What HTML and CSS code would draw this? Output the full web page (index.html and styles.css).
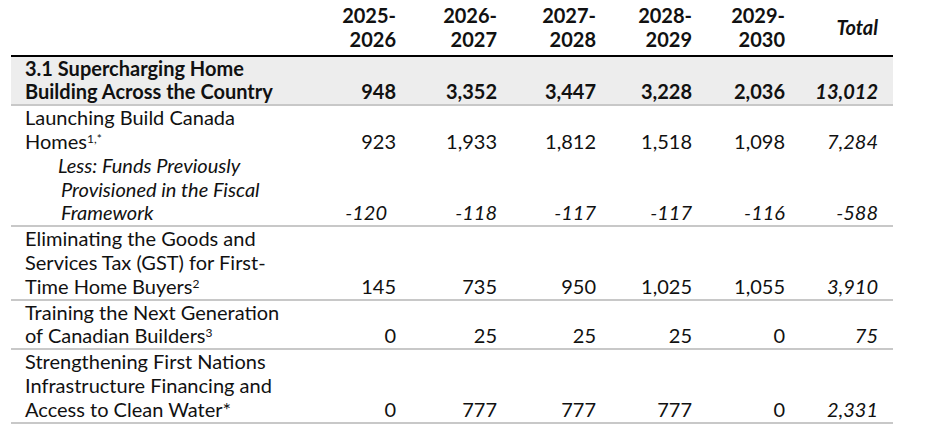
FILE: index.html
```html
<!DOCTYPE html>
<html lang="en">
<head>
<meta charset="utf-8">
<title>Supercharging Home Building</title>
<link rel="stylesheet" href="styles.css">
</head>
<body>
<div class="page">
<table class="fin">
  <colgroup>
    <col class="c-label">
    <col class="c-y1">
    <col class="c-y2">
    <col class="c-y3">
    <col class="c-y4">
    <col class="c-y5">
    <col class="c-tot">
  </colgroup>
  <thead>
    <tr>
      <th class="label"></th>
      <th class="num">2025-<br>2026</th>
      <th class="num">2026-<br>2027</th>
      <th class="num">2027-<br>2028</th>
      <th class="num">2028-<br>2029</th>
      <th class="num">2029-<br>2030</th>
      <th class="num total mid">Total</th>
    </tr>
  </thead>
  <tbody>
    <tr class="section sep">
      <td class="label">3.1 Supercharging Home Building Across the Country</td>
      <td class="num">948</td>
      <td class="num">3,352</td>
      <td class="num">3,447</td>
      <td class="num">3,228</td>
      <td class="num">2,036</td>
      <td class="num total">13,012</td>
    </tr>
    <tr>
      <td class="label">Launching Build Canada Homes<sup>1,*</sup></td>
      <td class="num">923</td>
      <td class="num">1,933</td>
      <td class="num">1,812</td>
      <td class="num">1,518</td>
      <td class="num">1,098</td>
      <td class="num total">7,284</td>
    </tr>
    <tr class="less sep">
      <td class="label sub">Less: Funds Previously Provisioned in the Fiscal Framework</td>
      <td class="num shift">-120</td>
      <td class="num">-118</td>
      <td class="num">-117</td>
      <td class="num">-117</td>
      <td class="num">-116</td>
      <td class="num total">-588</td>
    </tr>
    <tr class="sep">
      <td class="label">Eliminating the Goods and Services Tax (GST) for First-Time Home Buyers<sup>2</sup></td>
      <td class="num">145</td>
      <td class="num">735</td>
      <td class="num">950</td>
      <td class="num">1,025</td>
      <td class="num">1,055</td>
      <td class="num total">3,910</td>
    </tr>
    <tr class="sep">
      <td class="label">Training the Next Generation of Canadian Builders<sup>3</sup></td>
      <td class="num">0</td>
      <td class="num">25</td>
      <td class="num">25</td>
      <td class="num">25</td>
      <td class="num">0</td>
      <td class="num total">75</td>
    </tr>
    <tr class="sep">
      <td class="label">Strengthening First Nations Infrastructure Financing and Access to Clean Water*</td>
      <td class="num">0</td>
      <td class="num">777</td>
      <td class="num">777</td>
      <td class="num">777</td>
      <td class="num">0</td>
      <td class="num total">2,331</td>
    </tr>
  </tbody>
</table>
</div>
</body>
</html>
```

FILE: styles.css
```css
html, body {
  margin: 0;
  padding: 0;
  background: #ffffff;
}

.page {
  padding: 4px 0 0 11px;
  font-family: Lato, "Liberation Sans", sans-serif;
  font-size: 20px;
  line-height: 23.8px;
  color: #111111;
}

.fin {
  border-collapse: collapse;
  table-layout: fixed;
  width: 882px;
}

.c-label { width: 289px; }
.c-y1 { width: 111px; }
.c-y2 { width: 101px; }
.c-y3 { width: 99px; }
.c-y4 { width: 96px; }
.c-y5 { width: 93px; }
.c-tot { width: 93px; }

.fin th,
.fin td {
  padding: 0 15px 0 0;
  vertical-align: bottom;
}

.fin thead th {
  font-weight: 700;
  padding-bottom: 3px;
  border-bottom: 2px solid #000000;
}

.fin thead th.mid {
  vertical-align: middle;
}

.fin .label {
  text-align: left;
  padding-left: 14px;
  padding-right: 10px;
}

.fin .num {
  text-align: right;
  white-space: nowrap;
}

.fin .total {
  font-style: italic;
}

.fin .shift {
  padding-right: 24px;
}

.section td {
  background: #ededed;
  font-weight: 700;
}

.sep td {
  border-bottom: 2px solid #c8c8c8;
}

.less td {
  font-style: italic;
}

.fin .sub {
  padding-left: 50px;
  text-indent: -3px;
}

sup {
  font-size: 12px;
  line-height: 0;
  vertical-align: 6px;
}
```
